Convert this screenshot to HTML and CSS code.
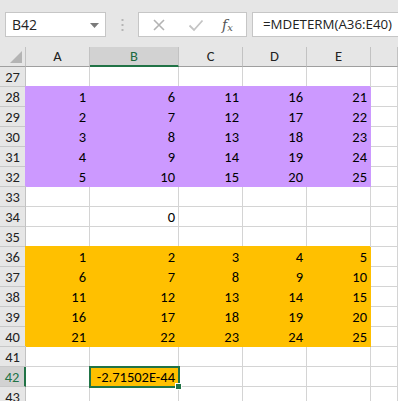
FILE: index.html
```html
<!DOCTYPE html>
<html lang="en">
<head>
    <meta charset="UTF-8">
    <title>MDETERM</title>
    <link rel="stylesheet" href="styles.css">
</head>
<body>
    <div class="formula-bar">
        <div class="name-box">
            <span>B42</span>
            <svg class="arrow" width="9" height="5" viewBox="0 0 9 5"><path d="M0 0h9L4.5 5z" fill="#7a7a7a"/></svg>
        </div>
        <svg class="grip" width="3" height="12" viewBox="0 0 3 12">
            <rect x="0.5" y="0" width="2" height="2" fill="#b5b5b5"/>
            <rect x="0.5" y="5" width="2" height="2" fill="#b5b5b5"/>
            <rect x="0.5" y="10" width="2" height="2" fill="#b5b5b5"/>
        </svg>
        <div class="fx-buttons">
            <svg width="14" height="14" viewBox="0 0 14 14"><path d="M2 2l10 10M12 2L2 12" stroke="#b3b3b3" stroke-width="1.6"/></svg>
            <svg width="16" height="14" viewBox="0 0 16 14"><path d="M1.5 7.5l4.5 4.5L14.5 2.5" stroke="#c4c4c4" stroke-width="1.8" fill="none"/></svg>
            <span class="fx">f<sub>x</sub></span>
        </div>
        <div class="formula-input">=MDETERM(A36:E40)</div>
    </div>

    <div class="sheet">
        <div class="row head">
            <div class="corner"></div>
            <div class="ch">A</div>
            <div class="ch sel">B</div>
            <div class="ch">C</div>
            <div class="ch">D</div>
            <div class="ch">E</div>
            <div class="ch"></div>
        </div>
        <div class="row">
            <div class="rh">27</div><div class="c"></div><div class="c"></div><div class="c"></div><div class="c"></div><div class="c"></div><div class="c"></div>
        </div>
        <div class="row">
            <div class="rh">28</div><div class="c p">1</div><div class="c p">6</div><div class="c p">11</div><div class="c p">16</div><div class="c p">21</div><div class="c"></div>
        </div>
        <div class="row">
            <div class="rh">29</div><div class="c p">2</div><div class="c p">7</div><div class="c p">12</div><div class="c p">17</div><div class="c p">22</div><div class="c"></div>
        </div>
        <div class="row">
            <div class="rh">30</div><div class="c p">3</div><div class="c p">8</div><div class="c p">13</div><div class="c p">18</div><div class="c p">23</div><div class="c"></div>
        </div>
        <div class="row">
            <div class="rh">31</div><div class="c p">4</div><div class="c p">9</div><div class="c p">14</div><div class="c p">19</div><div class="c p">24</div><div class="c"></div>
        </div>
        <div class="row">
            <div class="rh">32</div><div class="c p">5</div><div class="c p">10</div><div class="c p">15</div><div class="c p">20</div><div class="c p">25</div><div class="c"></div>
        </div>
        <div class="row">
            <div class="rh">33</div><div class="c"></div><div class="c"></div><div class="c"></div><div class="c"></div><div class="c"></div><div class="c"></div>
        </div>
        <div class="row">
            <div class="rh">34</div><div class="c"></div><div class="c">0</div><div class="c"></div><div class="c"></div><div class="c"></div><div class="c"></div>
        </div>
        <div class="row">
            <div class="rh">35</div><div class="c"></div><div class="c"></div><div class="c"></div><div class="c"></div><div class="c"></div><div class="c"></div>
        </div>
        <div class="row">
            <div class="rh">36</div><div class="c o">1</div><div class="c o">2</div><div class="c o">3</div><div class="c o">4</div><div class="c o">5</div><div class="c"></div>
        </div>
        <div class="row">
            <div class="rh">37</div><div class="c o">6</div><div class="c o">7</div><div class="c o">8</div><div class="c o">9</div><div class="c o">10</div><div class="c"></div>
        </div>
        <div class="row">
            <div class="rh">38</div><div class="c o">11</div><div class="c o">12</div><div class="c o">13</div><div class="c o">14</div><div class="c o">15</div><div class="c"></div>
        </div>
        <div class="row">
            <div class="rh">39</div><div class="c o">16</div><div class="c o">17</div><div class="c o">18</div><div class="c o">19</div><div class="c o">20</div><div class="c"></div>
        </div>
        <div class="row">
            <div class="rh">40</div><div class="c o">21</div><div class="c o">22</div><div class="c o">23</div><div class="c o">24</div><div class="c o">25</div><div class="c"></div>
        </div>
        <div class="row">
            <div class="rh">41</div><div class="c"></div><div class="c"></div><div class="c"></div><div class="c"></div><div class="c"></div><div class="c"></div>
        </div>
        <div class="row">
            <div class="rh sel">42</div><div class="c"></div><div class="c o active">-2.71502E-44</div><div class="c"></div><div class="c"></div><div class="c"></div><div class="c"></div>
        </div>
        <div class="row">
            <div class="rh">43</div><div class="c"></div><div class="c"></div><div class="c"></div><div class="c"></div><div class="c"></div><div class="c"></div>
        </div>
    </div>
</body>
</html>
```

FILE: styles.css
```css
body {
    margin: 0;
    width: 398px;
    height: 401px;
    overflow: hidden;
    background-color: #fff;
    font-family: Carlito, Lato, "Liberation Sans", sans-serif;
}

.formula-bar {
    height: 47px;
    box-sizing: border-box;
    padding: 12px 0 0 5px;
    display: flex;
    align-items: flex-start;
    background-color: #e6e6e6;
}

.name-box {
    width: 101px;
    height: 25px;
    box-sizing: border-box;
    border: 1px solid #c6c6c6;
    background: #fff;
    display: flex;
    align-items: center;
    justify-content: space-between;
    padding: 0 6px 0 6px;
    font-family: "Open Sans", "Noto Sans", sans-serif;
    font-size: 14px;
    color: #222;
}

.name-box .arrow {
    margin-top: 1px;
}

.grip {
    margin: 7px 14px 0 15px;
}

.fx-buttons {
    width: 109px;
    height: 25px;
    box-sizing: border-box;
    border: 1px solid #c6c6c6;
    background: #fff;
    display: flex;
    align-items: center;
    gap: 22px;
    padding-left: 13px;
}

.fx {
    font-family: "DejaVu Serif", "Liberation Serif", serif;
    font-style: italic;
    font-size: 14px;
    color: #555;
    margin-left: -4px;
}

.fx sub {
    font-size: 10px;
    vertical-align: baseline;
    position: relative;
    top: 1px;
}

.formula-input {
    flex: 1;
    height: 25px;
    box-sizing: border-box;
    margin-left: 5px;
    border: 1px solid #c6c6c6;
    border-right: none;
    background: #fff;
    padding: 0 0 0 10px;
    font-family: "Open Sans", "Noto Sans", sans-serif;
    font-size: 13.3px;
    line-height: 23px;
    color: #222;
}

.sheet {
    font-size: 14.5px;
    color: #000;
}

.row {
    display: grid;
    grid-template-columns: 26px 64px 89px 64px 64px 64px 1fr;
    height: 20px;
}

.row > div {
    box-sizing: border-box;
    height: 20px;
    border-right: 1px solid #d4d4d4;
    border-bottom: 1px solid #d4d4d4;
}

.head > div {
    background: #e6e6e6;
    border-right-color: #c2c2c2;
    border-bottom-color: #9f9f9f;
    text-align: center;
    line-height: 19px;
    color: #222;
}

.corner {
    position: relative;
}

.corner::after {
    content: "";
    position: absolute;
    right: 3px;
    bottom: 3px;
    border-style: solid;
    border-width: 0 0 12px 12px;
    border-color: transparent transparent #b4b4b4 transparent;
}

.head .ch.sel {
    background: #d2d2d2;
    border-bottom: 2px solid #217346;
    color: #1e6a3f;
}

.rh {
    background: #e6e6e6;
    text-align: center;
    line-height: 20px;
    color: #222;
}

.row > .rh {
    border-right-color: #c2c2c2;
    border-bottom-color: #c8c8c8;
}

.row > .rh.sel {
    background: #d2d2d2;
    border-right: 2px solid #217346;
    color: #217346;
}

.c {
    text-align: right;
    padding-right: 3px;
    line-height: 20px;
}

.row > .p {
    background: #cc99ff;
    border-color: #cc99ff;
    box-shadow: -1px -1px 0 0 #cc99ff;
}

.row > .o {
    background: #ffc000;
    border-color: #ffc000;
    box-shadow: -1px -1px 0 0 #ffc000;
}

.row > .active {
    position: relative;
    outline: 2px solid #217346;
    outline-offset: -1px;
    box-shadow: none;
}

.active::after {
    content: "";
    position: absolute;
    right: -4px;
    bottom: -4px;
    width: 5px;
    height: 5px;
    background: #217346;
    border: 1px solid #fff;
}
```
